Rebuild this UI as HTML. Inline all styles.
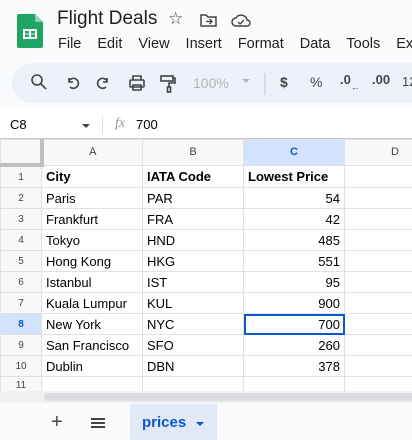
<!DOCTYPE html><html><head><style>
body{margin:0;width:412px;height:440px;overflow:hidden;background:#f9fbfd;font-family:"Liberation Sans",Arial,sans-serif;position:relative}
.a{position:absolute}
.t{font-size:13px;color:#000}
table{border-collapse:collapse;position:absolute;left:0;top:139px;table-layout:fixed;width:445px}
td{border:1px solid #e1e1e1;height:20px;padding:0 4px;font-size:13px;white-space:nowrap;overflow:hidden;background:#fff}
td.h{background:#f8f9fa;color:#444;font-size:10px;text-align:center;padding:0}
tr.hd td{height:23px;font-size:11px;color:#444;background:#f8f9fa;text-align:center}
.r{text-align:right}
</style></head><body>
<svg class="a" style="left:17px;top:14px" width="26" height="34" viewBox="0 0 26 34"><path d="M2 0h16l8 8v24a2 2 0 0 1-2 2H2a2 2 0 0 1-2-2V2a2 2 0 0 1 2-2z" fill="#1fa463"/><path d="M18 0l8 8h-6a2 2 0 0 1-2-2z" fill="#8ed1b1"/><rect x="6" y="15" width="14" height="10" fill="#fff"/><rect x="8" y="17" width="4" height="2.5" fill="#1fa463"/><rect x="14" y="17" width="4" height="2.5" fill="#1fa463"/><rect x="8" y="20.5" width="4" height="2.5" fill="#1fa463"/><rect x="14" y="20.5" width="4" height="2.5" fill="#1fa463"/></svg>
<div class="a" style="left:57px;top:8px;font-size:19px;color:#1f1f1f">Flight Deals</div>
<div class="a" style="left:168px;top:9px;font-size:17px;color:#444">☆</div>
<svg class="a" style="left:200px;top:13px" width="17" height="14"><path d="M1 2h5l2 2h8v9H1z" fill="none" stroke="#444" stroke-width="1.5"/><path d="M6 8.5h6M9.5 6l2.5 2.5-2.5 2.5" fill="none" stroke="#444" stroke-width="1.3"/></svg>
<svg class="a" style="left:231px;top:13px" width="20" height="14"><path d="M5 13a4 4 0 0 1 0-8a6 6 0 0 1 11 2a3 3 0 0 1 0 6z" fill="none" stroke="#444" stroke-width="1.5"/><path d="M7 9l2 2 4-4" fill="none" stroke="#444" stroke-width="1.3"/></svg>
<div class="a" style="left:58px;top:36px;font-size:14.5px;color:#1f1f1f;white-space:nowrap"><span>File</span><span style="margin-left:16px">Edit</span><span style="margin-left:16px">View</span><span style="margin-left:16px">Insert</span><span style="margin-left:16px">Format</span><span style="margin-left:16px">Data</span><span style="margin-left:16px">Tools</span><span style="margin-left:16px">Ex</span></div>
<div class="a" style="left:12px;top:63px;width:420px;height:40px;border-radius:20px;background:#edf2fa"></div>
<svg class="a" style="left:0;top:63px" width="412" height="40" fill="none" stroke="#444" stroke-width="1.6">
<circle cx="37" cy="17" r="5"/><path d="M41 21l5 5"/>
<path d="M69 18a5 5 0 1 1 1 6M69 15v4h4"/>
<path d="M107 18a5 5 0 1 0-1 6M107 15v4h-4"/>
<rect x="130" y="17" width="14" height="7" rx="1"/><path d="M133 17v-4h8v4M133 22h8v5h-8z"/>
<rect x="161" y="13" width="12" height="5"/><path d="M173 15h2v5h-6v4"/><rect x="167.5" y="24" width="3" height="5"/>
<path d="M265 10v22" stroke="#c7c7c7" stroke-width="1"/>
</svg>
<div class="a" style="left:193px;top:75px;font-size:14px;color:#b5b5b5">100%</div>
<div class="a" style="left:242px;top:79px;width:0;height:0;border-left:4px solid transparent;border-right:4px solid transparent;border-top:4px solid #b5b5b5"></div>
<div class="a" style="left:280px;top:74px;font-size:14px;color:#444;font-weight:bold">$</div>
<div class="a" style="left:310px;top:74px;font-size:14px;color:#444">%</div>
<div class="a" style="left:340px;top:72px;font-size:13px;color:#444;font-weight:bold">.0<span style="font-size:9px;position:relative;top:6px">←</span></div>
<div class="a" style="left:372px;top:72px;font-size:13px;color:#444;font-weight:bold">.00</div>
<div class="a" style="left:402px;top:74px;font-size:13px;color:#444">12</div>
<div class="a" style="left:0;top:110px;width:412px;height:28px;background:#fff;border-bottom:1px solid #c7c7c7"></div>
<div class="a t" style="left:10px;top:117px;font-size:13px">C8</div>
<div class="a" style="left:82px;top:124px;border-left:4px solid transparent;border-right:4px solid transparent;border-top:4px solid #444"></div>
<div class="a" style="left:102px;top:116px;width:1px;height:18px;background:#ddd"></div>
<div class="a" style="left:115px;top:116px;font-size:14px;color:#999;font-style:italic;font-family:'Liberation Serif',serif">fx</div>
<div class="a t" style="left:136px;top:117px;font-size:13px">700</div>
<table>
<colgroup><col style="width:41px"><col style="width:101px"><col style="width:101px"><col style="width:101px"><col style="width:101px"></colgroup>
<tr class="hd"><td style="border-right:4px solid #c0c0c0;border-bottom:4px solid #c0c0c0"></td><td>A</td><td>B</td><td style="background:#d3e3fd;color:#0b57d0;font-weight:bold">C</td><td>D</td></tr>
<tr><td class="h">1</td><td><b>City</b></td><td><b>IATA Code</b></td><td><b>Lowest Price</b></td><td></td></tr>
<tr><td class="h">2</td><td>Paris</td><td>PAR</td><td class="r">54</td><td></td></tr>
<tr><td class="h">3</td><td>Frankfurt</td><td>FRA</td><td class="r">42</td><td></td></tr>
<tr><td class="h">4</td><td>Tokyo</td><td>HND</td><td class="r">485</td><td></td></tr>
<tr><td class="h">5</td><td>Hong Kong</td><td>HKG</td><td class="r">551</td><td></td></tr>
<tr><td class="h">6</td><td>Istanbul</td><td>IST</td><td class="r">95</td><td></td></tr>
<tr><td class="h">7</td><td>Kuala Lumpur</td><td>KUL</td><td class="r">900</td><td></td></tr>
<tr><td class="h" style="background:#d3e3fd;color:#0b57d0;font-weight:bold">8</td><td>New York</td><td>NYC</td><td class="r" style="outline:2px solid #0b57d0;outline-offset:-2px;box-shadow:0 0 0 1px #a8c7fa">700</td><td></td></tr>
<tr><td class="h">9</td><td>San Francisco</td><td>SFO</td><td class="r">260</td><td></td></tr>
<tr><td class="h">10</td><td>Dublin</td><td>DBN</td><td class="r">378</td><td></td></tr>
<tr><td class="h" style="height:16px">11</td><td style="height:16px"></td><td style="height:16px"></td><td style="height:16px"></td><td style="height:16px"></td></tr>
</table>
<div class="a" style="left:0;top:391px;width:412px;height:12px;background:#f1f1f1"></div>
<div class="a" style="left:44px;top:393px;width:380px;height:8px;border-radius:4px;background:#dadce0"></div>
<div class="a" style="left:0;top:403px;width:412px;height:37px;background:#f9fbfd"></div>
<div class="a" style="left:51px;top:411px;font-size:20px;color:#444">+</div>
<div class="a" style="left:91px;top:418px;width:14px;height:2px;background:#444;box-shadow:0 4px 0 #444,0 8px 0 #444"></div>
<div class="a" style="left:130px;top:404px;width:87px;height:36px;background:#e1e9f7"></div>
<div class="a" style="left:142px;top:414px;font-size:15px;color:#0b57d0;font-weight:bold">prices</div>
<div class="a" style="left:196px;top:422px;border-left:4px solid transparent;border-right:4px solid transparent;border-top:4px solid #0b57d0"></div>
</body></html>
